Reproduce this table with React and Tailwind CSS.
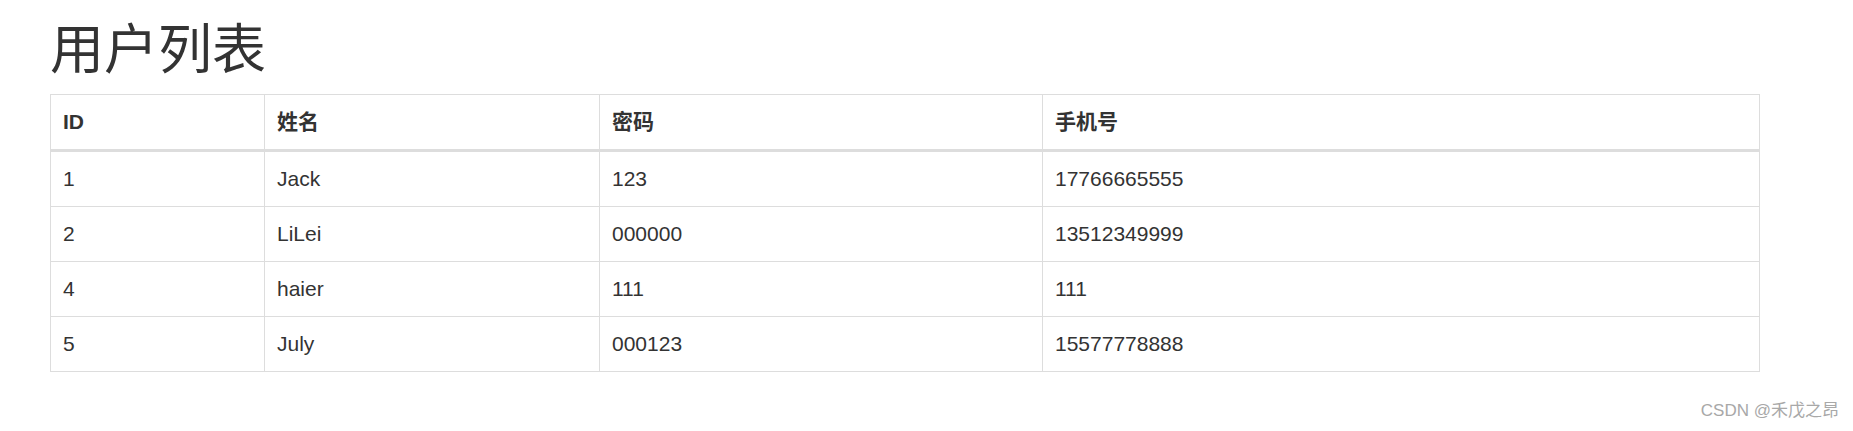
const users = [
  { id: 1, name: 'Jack', password: '123', phone: '17766665555' },
  { id: 2, name: 'LiLei', password: '000000', phone: '13512349999' },
  { id: 4, name: 'haier', password: '111', phone: '111' },
  { id: 5, name: 'July', password: '000123', phone: '15577778888' },
];

const font = "font-['Liberation_Sans','Noto_Sans_CJK_SC',sans-serif]";

const App = () => {
  return (
    <div className={`relative h-[431px] w-full bg-white text-[#333] ${font}`}>
      <div className="pl-[50px] pt-[21px]">
        <h1 className="mb-[14px] text-[54px] font-normal leading-[1.1]">用户列表</h1>

        <table className="w-[1710px] table-fixed border-collapse border border-[#ddd] text-[21px] leading-[30px]">
          <thead>
            <tr>
              <th className="w-[214px] border border-b-[3px] border-[#ddd] px-[12px] py-[12px] text-left font-bold">ID</th>
              <th className="w-[335px] border border-b-[3px] border-[#ddd] px-[12px] py-[12px] text-left font-bold">姓名</th>
              <th className="w-[443px] border border-b-[3px] border-[#ddd] px-[12px] py-[12px] text-left font-bold">密码</th>
              <th className="border border-b-[3px] border-[#ddd] px-[12px] py-[12px] text-left font-bold">手机号</th>
            </tr>
          </thead>
          <tbody>
            {users.map((u) => (
              <tr key={u.id}>
                <td className="border border-[#ddd] p-[12px]">{u.id}</td>
                <td className="border border-[#ddd] p-[12px]">{u.name}</td>
                <td className="border border-[#ddd] p-[12px]">{u.password}</td>
                <td className="border border-[#ddd] p-[12px]">{u.phone}</td>
              </tr>
            ))}
          </tbody>
        </table>
      </div>

      {/* marca d'água do CSDN */}
      <div className="absolute bottom-[8px] right-[14px] text-[17px] leading-[24px] text-[#a8a8a8]">
        CSDN @禾戊之昂
      </div>
    </div>
  );
};

export default App;
